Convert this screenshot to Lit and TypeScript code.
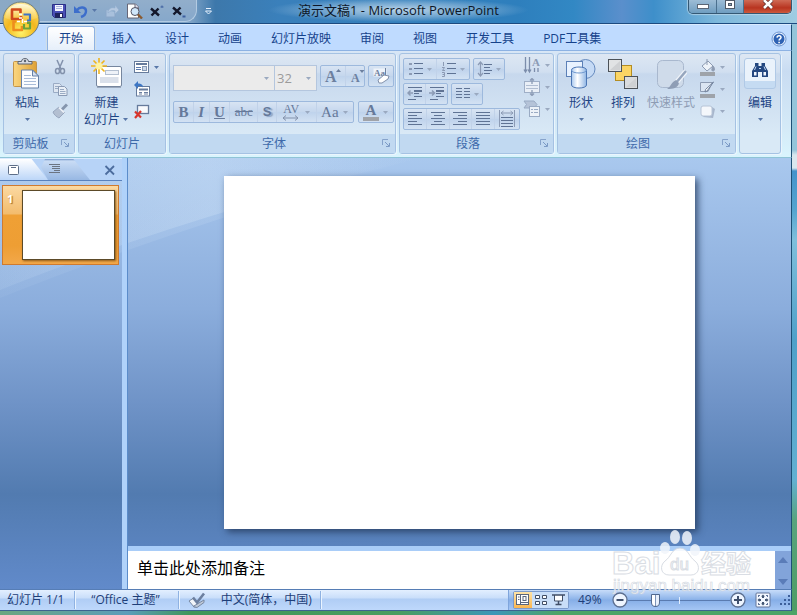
import { LitElement, html, css, svg, TemplateResult } from "lit";
import { customElement, property, state } from "lit/decorators.js";
import { classMap } from "lit/directives/class-map.js";

const grey = "#8291ab";
const dim = "#9aabc4";

const lines = (rows: [number, number, number][], color = "#5f7394") =>
  rows.map(([x1, x2, y]) => svg`<path d="M${x1} ${y}.5H${x2}" stroke=${color} fill="none"/>`);

const icons: Record<string, [number, number, unknown]> = {
  save: [16, 16, svg`<path d="M1.500 1.500h13v13h-11l-2-2z" fill="#4a4fb5" stroke="#2b2f88"/><path d="M4 2h8v6H4z" fill="#f4f6ff"/><path d="M5 3.500h6M5 5.500h6" stroke="#aab4dd"/><path d="M4 10h8v5H4z" fill="#20245e"/><path d="M9 11h2v3H9z" fill="#fff"/>`],
  undo: [16, 16, svg`<path d="M4 7c3-4 9-3 9 1 0 3-2 5-5 6" fill="none" stroke="#3d6ecb" stroke-width="2.400"/><path d="M1 3v7h7z" fill="#3d6ecb"/>`],
  redo: [16, 16, svg`<path d="M2 7v7h9V9" fill="#a8c0dc" stroke="#8aa6c8"/><path d="M4 10c0-5 4-6 7-5V2l4 5-4 4V8c-3-1-5 0-7 2z" fill="#b4c8e0" stroke="#8fabcd" stroke-width=".6"/>`],
  preview: [17, 16, svg`<path d="M1.500 1h8l3 3v11h-11z" fill="#fff" stroke="#667"/><path d="M9 1v4h4" fill="#dde" stroke="#667"/><circle cx="9" cy="8.500" r="4" fill="#cfe6fa" stroke="#556"/><path d="M12 11.500l4 4" stroke="#8a5a30" stroke-width="2.400"/>`],
  sup: [16, 16, svg`<path d="M2 5.500l8 7M9.500 5.500l-7 7" stroke="#14182c" stroke-width="2.400"/><path d="M11.500 4h3M13 2.500v2" stroke="#3c5f9e"/>`],
  sub: [16, 16, svg`<path d="M2 4.500l8 7M9.500 4.500l-7 7" stroke="#14182c" stroke-width="2.400"/><path d="M11.500 13.500h3" stroke="#3c5f9e" stroke-width="2"/>`],
  qat: [9, 9, svg`<path d="M2 1.500h5" stroke="#e8f2ff"/><path d="M1.500 4l3 3 3-3z" fill="none" stroke="#e8f2ff"/>`],
  down: [7, 5, svg`<path d="M1 1h5L3.500 4z" fill="#5877a8"/>`],
  downDim: [7, 5, svg`<path d="M1 1h5L3.500 4z" fill="#9aa9c0"/>`],
  help: [16, 16, svg`<circle cx="8" cy="8" r="7" fill="#e9f2ff" stroke="#6c93cf"/><circle cx="8" cy="8" r="5.500" fill="#2e62b4"/><path d="M6 6.600c.2-2.600 4.400-2.400 4 .1-.2 1.300-1.900 1.200-1.900 2.900" fill="none" stroke="#fff" stroke-width="1.500"/><path d="M7.300 10.700h1.600v1.500H7.300z" fill="#fff"/>`],
  paste: [32, 32, svg`<defs><linearGradient id="pb" x2="1"><stop stop-color="#fbd680"/><stop offset="1" stop-color="#dea136"/></linearGradient></defs><rect x="2.500" y="3.500" width="23" height="25" rx="1" fill="url(#pb)" stroke="#c4954a"/><path d="M7 6h14V3.500h-3.500C17 1 16 .6 14 .6s-3 .4-3.500 2.900H7z" fill="#d8dce3" stroke="#5b6370"/><circle cx="14" cy="3" r="1.200" fill="#5b6370"/><path d="M10.500 12.500h11l6 6v12h-17z" transform="translate(0 -.5)" fill="#fcfdff" stroke="#6681a8"/><path d="M21.500 12v6h6z" fill="#d5e0ef" stroke="#6681a8"/><path d="M13 17.500h7M13 20.500h12M13 23.500h12M13 26.500h12" stroke="#a9bcd8"/>`],
  cut: [16, 16, svg`<path d="M5 1l4 9M11 1L7 10" stroke=${grey} stroke-width="1.500" fill="none"/><ellipse cx="5.500" cy="12" rx="2" ry="2.600" fill="none" stroke=${grey} stroke-width="1.500"/><ellipse cx="10.500" cy="12" rx="2" ry="2.600" fill="none" stroke=${grey} stroke-width="1.500"/>`],
  copy: [16, 16, svg`<path d="M1.500 2.500h6l2 2v7h-8z" fill="#dfe7f2" stroke=${dim}/><path d="M3 5.500h4M3 7.500h4" stroke=${dim}/><path d="M6.500 5.500h6l2.500 2.500v6.500h-8.500z" fill="#e9eff7" stroke="#8a9ab4"/><path d="M8 8.500h4M8 10.500h5.500M8 12.500h5.500" stroke=${dim}/>`],
  brush: [16, 16, svg`<path d="M15 1.500l-5 5" stroke="#8595ad" stroke-width="3"/><path d="M7 4l5.500 5.500L7 15C5 14 2 12 1 9z" fill="#b3bfd1" stroke="#98a7bf"/><path d="M7 4.500l5 5" stroke="#f1f5fa" stroke-width="1.500"/>`],
  newSlide: [32, 32, svg`<rect x="5.500" y="8.500" width="25" height="20" rx="1.500" fill="#fff" stroke="#76869e"/><path d="M6 29.500h24" stroke="#9aa8bd"/><rect x="14.500" y="12.500" width="13" height="4" fill="#eef2f8" stroke="#b3bfd0"/><rect x="9" y="19" width="18.500" height="6" fill="#dae0ea"/><path d="M8 0v16M0 8h16M2.500 2.500l11 11M13.500 2.500l-11 11" stroke="#efb41c" stroke-width="1.600"/><circle cx="8" cy="8" r="3.600" fill="#fff3a0"/>`],
  layout: [16, 16, svg`<rect x=".5" y="2.500" width="14" height="11" fill="#fff" stroke="#667b9c"/><path d="M2 5h11" stroke="#667b9c" stroke-width="2"/><path d="M2 8.500h5M2 10.500h5" stroke="#5b7bb0"/><rect x="8.500" y="7.500" width="4" height="4" fill="#ccd8ea" stroke="#8598b4"/>`],
  reset: [16, 16, svg`<rect x="2.500" y="5.500" width="13" height="9.500" fill="#fff" stroke="#667b9c"/><path d="M5 8.500h9" stroke="#667b9c" stroke-width="2"/><path d="M5 11.500h3M5 13h3M10 11.500h4M10 13h4" stroke="#6a7ea0"/><path d="M0 4l4-4v2.500c3 0 5 1 5 4-1-1.500-2.500-1.800-5-1.500V8z" fill="#3d76c4"/>`],
  del: [16, 16, svg`<rect x="3.500" y="2.500" width="11" height="8" fill="#f8fafd" stroke="#667b9c" stroke-width="1.300"/><path d="M1 8.500l6 6M7 8l-6 7" stroke="#d8352c" stroke-width="2.200"/>`],
  launcher: [9, 9, svg`<path d="M.5 6V.5H6" fill="none" stroke="#86a3cb"/><path d="M3 3l4 4M7.500 4v3.500H4" fill="none" stroke="#7c9bc6"/>`],
  grow: [20, 18, svg`<text x="2" y="15" font-family="Liberation Serif" font-weight="bold" font-size="16" fill="#6d809f">A</text><path d="M13 5l2.500-3L18 5z" fill="#6d809f"/>`],
  shrink: [20, 18, svg`<text x="3" y="15" font-family="Liberation Serif" font-weight="bold" font-size="12" fill="#6d809f">A</text><path d="M11.500 3h5L14 6z" fill="#6d809f"/>`],
  clear: [20, 18, svg`<rect x="2.500" y="1.500" width="13" height="8" fill="#eef3fa"/><text x="3" y="9" font-family="Liberation Serif" font-weight="bold" font-size="9" fill="#6d809f">Aa</text><path d="M14.500 1v9" stroke="#6d809f"/><path d="M7 13l6-5 5 1-1 3-6 4H8z" fill="#fff" stroke="#8291ab"/>`],
  arrows2: [20, 6, svg`<path d="M2 3h15M5 .5L2 3l3 2.500M14 .5L17 3l-3 2.500" stroke=${grey} fill="none"/>`],
  bullets: [16, 16, svg`<path d="M1 3h3M1 8h3M1 13h3" stroke="#8c9bb5" stroke-width="1.800"/>${lines([[6, 15, 2], [6, 15, 7], [6, 15, 12]])}`],
  numbers: [16, 16, svg`<path d="M2.500 1v4M1 6.500h2.500l-2 3H4M1 11.500h2.500v4H1M1.500 13.500h2" fill="none" stroke="#8c9bb5"/>${lines([[6, 15, 2], [6, 15, 7], [6, 15, 12]])}`],
  spacing: [16, 16, svg`<path d="M3.500 1v14M1 4l2.500-3L6 4M1 12l2.500 3L6 12" fill="none" stroke="#8c9bb5" stroke-width="1.200"/>${lines([[7, 15, 3], [7, 13, 6], [7, 15, 9], [7, 13, 12]])}`],
  outdent: [16, 16, svg`${lines([[1, 15, 1], [7, 15, 4], [7, 15, 5], [7, 12, 7], [7, 15, 10], [1, 9, 13]])}<path d="M6 7H1M3.500 4.500L1 7l2.500 2.500" fill="none" stroke="#8c9bb5" stroke-width="1.500"/>`],
  indent: [16, 16, svg`${lines([[1, 15, 1], [7, 15, 4], [7, 15, 5], [7, 12, 7], [7, 15, 10], [1, 9, 13]])}<path d="M0 7h5M3 4.500L5.500 7 3 9.500" fill="none" stroke="#8c9bb5" stroke-width="1.500"/>`],
  columns: [16, 16, svg`${lines([[1, 7, 2], [9, 15, 2], [1, 7, 5], [9, 15, 5], [1, 7, 8], [9, 15, 8], [1, 7, 11], [9, 15, 11]])}`],
  left: [16, 16, svg`${lines([[1, 15, 1], [1, 10, 4], [1, 15, 7], [1, 10, 10], [1, 15, 13]])}`],
  center: [16, 16, svg`${lines([[1, 15, 1], [4, 12, 4], [1, 15, 7], [4, 12, 10], [1, 15, 13]])}`],
  right: [16, 16, svg`${lines([[1, 15, 1], [6, 15, 4], [1, 15, 7], [6, 15, 10], [1, 15, 13]])}`],
  justify: [16, 16, svg`${lines([[1, 15, 1], [1, 15, 4], [1, 15, 7], [1, 15, 10], [1, 15, 13]])}`],
  distribute: [18, 18, svg`<path d="M1.500 0v17M16.500 0v17M3 3h12M5.500 1L3 3l2.500 2M12.500 1L15 3l-2.500 2" fill="none" stroke="#8c9bb5"/>${lines([[3, 15, 7], [3, 15, 10], [3, 15, 13], [3, 15, 16]])}`],
  direction: [18, 18, svg`<path d="M2.500 1v15M6.500 1v15M1 13.500L2.500 16 4 13.500M5 13.500L6.500 16 8 13.500M11.500 12v4M15 12v4" fill="none" stroke="#7c8dab" stroke-width="1.300"/><text x="9" y="10" font-family="Liberation Serif" font-weight="bold" font-size="11" fill="#8c9bb5">A</text>`],
  alignText: [18, 18, svg`<rect x="1.500" y="3.500" width="15" height="11" fill="#e9eff7" stroke="#9fafc7"/><path d="M3 7.500h12M3 10.500h12" stroke="#b1bed2"/><path d="M9 0v6M9 12v5M7 2.500L9 .5l2 2M7 15.500l2 2 2-2" fill="none" stroke="#8c9bb5" stroke-width="1.300"/>`],
  smartArt: [18, 18, svg`<path d="M1 1h10l3 3.500L11 8H1l2.500-3.500z" fill="#b5c3d8" stroke="#9aabc4"/><rect x="6.500" y="6.500" width="10" height="10" fill="#edf2f8" stroke="#9aabc4"/><path d="M8 9.500h2M11 9.500h4M8 12.500h2M11 12.500h4" stroke="#9aabc4"/>`],
  shapes: [32, 32, svg`<defs><linearGradient id="cy" x2="1"><stop stop-color="#a9c8ee"/><stop offset=".4" stop-color="#fff"/><stop offset="1" stop-color="#8fb5e4"/></linearGradient></defs><circle cx="20.500" cy="11" r="9.500" fill="#c5daf5" stroke="#6489be"/><rect x="1.500" y="3.500" width="16" height="15" fill="#e8f2ff" stroke="#5c80b7"/><path d="M6.500 12c0-4 15-4 15 0v15c0 4-15 4-15 0z" fill="url(#cy)" stroke="#4c76b4"/><path d="M6.500 12c0 4 15 4 15 0" fill="none" stroke="#6f98cf"/>`],
  arrange: [32, 32, svg`<rect x="8.500" y="7.500" width="16" height="15" fill="#fbd564" stroke="#b48d22"/><rect x="1.500" y="1.500" width="13" height="12" fill="#e1e3e4" stroke="#4c5258"/><rect x="17.500" y="18.500" width="13" height="12" fill="#dadcde" stroke="#4c5258"/><path d="M3 12L13 3v9zM19 29l10-9v9z" fill="#cfd1d3"/>`],
  styles: [32, 32, svg`<rect x="2.500" y="2.500" width="26" height="27" rx="5" fill="#cfdbea" stroke="#a9b8ce"/><path d="M31 13L20 26" stroke="#f0f4fa" stroke-width="5"/><path d="M31 13L20 26" stroke="#96a6be" stroke-width="2.500"/><path d="M21 22l3 3c-1 5-6 6-12 6 4-2 4-7 9-9z" fill="#8e9db5"/>`],
  fill: [17, 17, svg`<path d="M3 7l6-5 5 5-6 5z" fill="#eef3f9" stroke="#8d9bb2"/><path d="M8 0v6M14 7c2 2 2 5 0 5s-1-3 0-5z" stroke="#8d9bb2" fill="#8d9bb2"/><path d="M1 13h15v4H1z" fill="#9ea3aa"/>`],
  outline: [17, 17, svg`<path d="M1.500 1.500h12L9 10.500H1.500z" fill="#dbe5f2" stroke="#8d9bb2"/><path d="M14.500 1L8 10l-2 1 .5-2.500z" fill="#fff" stroke="#6f809b"/><path d="M1 13h15v4H1z" fill="#9ea3aa"/>`],
  effects: [17, 17, svg`<path d="M4 14l10 1 2-9-3-2z" fill="#a7b6cc"/><rect x="2" y="3" width="11" height="10" rx="2" fill="#f4f7fb" stroke="#b6c4d7"/>`],
  find: [18, 18, svg`<path d="M4 2h3.500v3h3V2H14v3l3 5v6h-6v-5H7v5H1v-6l3-5z" fill="#24477f"/><path d="M3 11h2.500v3.500H3zM12.500 11H15v3.500h-2.500z" fill="#f1f6fd"/><path d="M5 5.500L3.500 9M13 5.500L14.500 9M8 7.500h2" stroke="#c4d7f2"/>`],
  slideTab: [12, 10, svg`<rect x=".5" y=".5" width="10" height="9" rx="1" fill="#fff" stroke="#5d6e88"/><path d="M3 2.500h5" stroke="#5d6e88"/>`],
  outlineTab: [12, 11, svg`${lines([[0, 11, 0], [3, 11, 2], [3, 11, 4], [5, 11, 6], [0, 11, 8]], "#6b7482")}`],
  close: [12, 12, svg`<path d="M1.500 2l8.500 8.500M10 2l-8.500 8.500" stroke="#4d6d9e" stroke-width="1.800"/>`],
  spell: [18, 16, svg`<path d="M1 9l4-2.500 5 4-2 4.500-2 0z" fill="#f2f5f9" stroke="#7888a2"/><path d="M5 14.500L16 8v2.500L9 15.500z" fill="#bfc9d8" stroke="#7888a2"/><path d="M5 5.500l4 5 7-9" fill="none" stroke="#6c7f9f" stroke-width="2.600"/>`],
  normalView: [16, 14, svg`<rect x="1.500" y="1.500" width="12" height="10" fill="#fff" stroke="#5a667c"/><path d="M5.500 2v9.500M6 9.500h8M3 4h1.500M3 6.500h1.500" stroke="#5a667c"/><rect x="8" y="3.500" width="3" height="4" fill="none" stroke="#5a667c"/>`],
  sorter: [16, 14, svg`<path d="M2.500 2.500h4v3h-4zM9.500 2.500h4v3h-4zM2.500 8.500h4v3h-4zM9.500 8.500h4v3h-4z" fill="#fff" stroke="#404e66"/>`],
  show: [16, 14, svg`<path d="M3.500 2v6h8V2" fill="#fff" stroke="#404e66"/><path d="M1 2h13M7.500 8v3M4.500 11.500h6" fill="none" stroke="#404e66" stroke-width="1.500"/>`],
  minus: [16, 16, svg`<circle cx="8" cy="8" r="7" fill="#eef5ff" stroke="#5c6f90" stroke-width="1.300"/><path d="M4.500 8h7" stroke="#3f4f6c" stroke-width="2"/>`],
  plus: [16, 16, svg`<circle cx="8" cy="8" r="7" fill="#eef5ff" stroke="#5c6f90" stroke-width="1.300"/><path d="M4 8h8M8 4v8" stroke="#3f4f6c" stroke-width="2"/>`],
  fit: [16, 16, svg`<rect x="1" y="1" width="14" height="14" rx="1" fill="#f4f8ff" stroke="#63759a"/><path d="M8 2.500l2 2H9V6H7V4.500H6zM8 13.500l2-2H9V10H7v1.500H6zM2.500 8l2-2v1H6v2H4.500v1zM13.500 8l-2-2v1H10v2h1.500v1z" fill="#445673"/><path d="M3 3h2v1H4v1H3zM13 3h-2v1h1v1h1zM3 13h2v-1H4v-1H3zM13 13h-2v-1h1v-1h1z" fill="#63759a"/>`],
  grip: [12, 12, svg`<path d="M9 1h2v2H9zM9 5h2v2H9zM9 9h2v2H9zM5 5h2v2H5zM5 9h2v2H5zM1 9h2v2H1z" fill="#3c5f9a"/>`],
  winMin: [14, 10, svg`<rect x="1.500" y="4.500" width="11" height="4" fill="#fff" stroke="#5b6675"/>`],
  winMax: [12, 10, svg`<rect x="1.500" y=".5" width="9" height="8" fill="#fff" stroke="#4f5966"/><rect x="4.500" y="3.500" width="3" height="2" fill="#8fa5bb" stroke="#4f5966"/>`],
  winClose: [14, 10, svg`<path d="M3 0l8 8M11 0L3 8" stroke="#5a2c2c" stroke-width="4"/><path d="M3 0l8 8M11 0L3 8" stroke="#fff" stroke-width="2.600"/>`],
  up: [12, 8, svg`<path d="M1 7h10L6 1z" fill="#5a7cb8"/>`],
  dn: [12, 8, svg`<path d="M1 1h10L6 7z" fill="#5a7cb8"/>`],
  orb: [38, 38, svg`<defs><radialGradient id="ob" cx=".5" cy=".85" r=".9"><stop stop-color="#fff36a"/><stop offset=".45" stop-color="#f3b71d"/><stop offset=".75" stop-color="#f8d257"/><stop offset="1" stop-color="#fdf0b8"/></radialGradient><linearGradient id="ow" y2="1" x2="0"><stop stop-color="#fffbe6" stop-opacity=".95"/><stop offset="1" stop-color="#fde27a" stop-opacity=".25"/></linearGradient></defs><circle cx="19" cy="19" r="18" fill="url(#ob)" stroke="#6e7d80"/><path d="M3 17C4 7 11 3 19 3s15 4 16 14c-9 4-23 4-32 0z" fill="url(#ow)"/><g fill="none" stroke-linejoin="round"><path d="M18.500 12V8.500h-8.500V18h9v-3" stroke="#cf4a1c" stroke-width="2.600"/><path d="M21.500 13.500h6.500v6h-3" stroke="#3f74c4" stroke-width="2.200"/><path d="M14 20.500h-2.500V29h8.500v-4" stroke="#ee8d1d" stroke-width="2.600"/><path d="M22 23v4.500h6v-5.500h-3" stroke="#6aa23a" stroke-width="2.200"/></g><path d="M17 13.500h3M17 17h3M20.500 18v4M15 20.500h3M22 20.500h3" stroke="#fff" stroke-width="1.500"/>`],
};

const icon = (name: string): TemplateResult => {
  const [w, h, body] = icons[name];
  return html`<svg width=${w} height=${h} viewBox="0 0 ${w} ${h}" aria-hidden="true">${body}</svg>`;
};

const base = css`
  * { box-sizing: border-box; }
  button, select, input, textarea {
    font: inherit; color: inherit; margin: 0; padding: 0; border: 0;
    background: none; outline: none; border-radius: 0;
  }
  svg { display: block; flex: none; }
`;

@customElement("ribbon-group")
class RibbonGroup extends LitElement {
  @property() label = "";
  @property({ type: Boolean }) launcher = false;
  static styles = [base, css`
    :host {
      display: flex; flex-direction: column; flex: none; border: 1px solid #a5c2e3; border-radius: 3px;
      background: linear-gradient(#dde7f3, #d1dff0 18px, #c7d8ed 20px, #d9e9f6 80px);
      box-shadow: 1px 1px 0 #eaf5fd;
    }
    .body { flex: 1; display: flex; }
    .foot { height: 19px; display: flex; align-items: center; background: #c1d9f1; color: #3e6aaa; padding: 0 4px; }
    .foot span { flex: 1; text-align: center; }
    .foot span:not(:last-child) { padding-right: 8px; }
    button { height: 13px; }
  `];
  render() {
    return html`<div class="body"><slot></slot></div>
      ${this.label ? html`<div class="foot"><span>${this.label}</span>
        ${this.launcher ? html`<button aria-label="${this.label}选项">${icon("launcher")}</button>` : ""}</div>` : ""}`;
  }
}

@customElement("app-root")
class AppRoot extends LitElement {
  @state() private tab = "开始";
  @state() private zoom = 25;

  static styles = [base, css`
    :host {
      box-sizing: border-box; display: flex; flex-direction: column; min-height: 100vh; overflow: hidden; position: relative;
      font: 12px/16px "Open Sans", "Noto Sans CJK SC", sans-serif; color: #1e3e78;
      background: linear-gradient(#94c5da 0 150px, #d9e7ee 155px 168px, #4593cb 171px, #55a4cf 210px, #7fbfdc 240px, #4fa0c9 340px, #62b0d2 480px, #58a47e 520px, #4d9d63);
      padding: 0 5px 4px 0;
    }
    .title {
      height: 24px; margin-right: -5px; display: grid; grid-template-columns: 1fr auto 1fr; align-items: start;
      background:
        radial-gradient(ellipse 130px 12px at 50% 10px, #b9d3e8 0, #8db7d9aa 60%, transparent),
        linear-gradient(90deg, #8ba9c5, #7ca1c5 24%, #3d78ab 27%, #3a80bb 35%, #2e7fbd 65%, #3288c4 72%, #5a8fcc 78%, #3e8fca 82%, #7db8dc 90%, #9fcce2);
      border-bottom: 1px solid #1c4a80;
    }
    .qat {
      justify-self: start; margin-left: 40px; height: 22px; width: 157px; padding: 0 8px 0 11px; display: flex; align-items: center; gap: 6px;
      border-radius: 0 0 12px 0; background: linear-gradient(#92aecb, #86a8cb); border: 1px solid #b3cbe2; border-width: 0 1px 1px 0;
    }
    .qatwrap { display: flex; align-items: center; gap: 7px; }
    .heading { margin: 0; font-size: 13px; font-weight: 400; line-height: 20px; color: #0c1626; white-space: nowrap; }
    .win { justify-self: end; display: flex; margin-right: 5px; height: 14px; border: 1px solid #345874; border-top: 0; border-radius: 0 0 5px 5px; overflow: hidden; box-shadow: 0 0 1px 1px #c5dcecaa; }
    .win button { width: 28px; display: flex; justify-content: center; background: linear-gradient(#9dbdd6, #6f9dc0); border-right: 1px solid #4b708e; }
    .win .max { width: 27px; }
    .win .x { width: 47px; border: 0; background: linear-gradient(#cf6a55, #b83420 60%, #cd5a3d); }
    .orb { position: absolute; left: 2px; top: 1px; }

    .tabs { height: 26px; display: flex; gap: 5px; padding: 1px 3px 0 47px; background: #bfdbff; border-top: 1px solid #d9ebff; border-right: 1px solid #1e5076; }
    .tabs button { padding: 0 11px; border: 1px solid transparent; border-bottom: 0; border-radius: 3px 3px 0 0; color: #15428b; white-space: nowrap; }
    .tabs .on { background: linear-gradient(#fff, #e6effa); border-color: #8db2e3; box-shadow: 0 0 2px #ffe9a8; }
    .tabs .help { margin-left: auto; padding: 0; }

    .ribbon {
      height: 108px; display: flex; gap: 3px; padding: 2px 3px 3px; border: 1px solid #8db2e3; border-left: 0; border-right-color: #1e5076;
      border-bottom-color: #8fc4d6; background: linear-gradient(#d8e6f6, #c9dcf2 20px, #d5ebf8 80px, #d9f4fd); white-space: nowrap;
    }
    .clip { width: 72px; } .slides { width: 88px; } .font { width: 227px; }
    .para { width: 155px; } .draw { width: 179px; } .edit { width: 42px; }
    .big { display: flex; flex-direction: column; align-items: center; line-height: 17px; color: #1e4484; }
    .big svg { margin-bottom: 4px; }
    .big svg:last-child { margin: 0; }
    .inline { display: flex; align-items: center; gap: 2px; }
    .big .inline svg { margin: 0; }
    .big .cap { margin-bottom: 6px; }
    .off { color: #8e9cb4; }
    .clip .big { padding: 4px 0 0 6px; width: 40px; }
    .col { display: flex; flex-direction: column; gap: 6px; padding-top: 5px; }
    .col button { display: flex; align-items: center; gap: 3px; height: 16px; }
    .clip .col { margin-left: 8px; }
    .slides .big { padding: 4px 0 0 5px; }
    .slides .col { margin-left: 5px; }
    .stack { display: flex; flex-direction: column; }
    .row { display: flex; gap: 3px; }
    .font .stack { padding: 11px 3px 0; gap: 10px; flex: 1; }
    .para .stack { padding: 4px 3px 0; gap: 3px; }
    .set { display: flex; border: 1px solid #9db9dd; border-radius: 2px; height: 22px; background: linear-gradient(#d8e4f3, #c4d6ed 50%, #bfd3ec 52%, #d3e2f3); color: #66799a; }
    .set button { display: flex; align-items: center; justify-content: center; gap: 3px; flex: 1 1 auto; padding: 0 2px; border-right: 1px solid #c1d2e9; }
    .set button:last-child { border-right: 0; }
    .font .row { justify-content: space-between; }
    .combos { display: flex; }
    .combo { display: flex; align-items: center; height: 26px; background: #ebebeb; border: 1px solid #b4c6de; color: #9b9b9b; padding-right: 4px; }
    .combo select { appearance: none; flex: 1; min-width: 0; height: 100%; padding: 0 2px; opacity: 1; font-size: 13px; }
    .combo.face { width: 102px; } .combo.size { width: 43px; margin-left: -1px; }
    .serif { font-family: "Liberation Serif", serif; font-size: 15px; line-height: 18px; }
    .b { font-weight: 700; } .i { font-style: italic; font-weight: 700; } .u { text-decoration: underline; font-weight: 700; }
    .s { text-decoration: line-through; } .small { font-size: 13px; }
    .sh { font-family: "Liberation Sans", sans-serif; font-weight: 700; font-size: 13px; text-shadow: 2px 1px 1px #8fa4c4; }
    .av { display: flex; flex-direction: column; line-height: 11px; align-items: center; font-size: 12px; }
    .colour { border-bottom: 4px solid #a0a3a8; line-height: 14px; padding: 0 3px; }
    .para .col { padding-top: 3px; }
    .w67 { width: 67px; } .w32 { width: 32px; } .w45 { width: 45px; } .w117 { width: 117px; } .w180 { width: 181px; } .w36 { width: 36px; }
    .para .set button { gap: 2px; padding: 0; }
    .draw .big { padding-top: 4px; }
    .draw .b1 { margin-left: 6px; width: 34px; } .draw .b2 { margin-left: 8px; width: 34px; } .draw .b3 { margin-left: 6px; width: 50px; }
    .draw .col { margin-left: 3px; padding-top: 5px; }
    .edit .big { width: 40px; padding-top: 4px; }
    .frame { width: 32px; height: 31px; margin-bottom: 5px; padding-top: 2px; display: grid; place-items: start center; border: 1px solid #b0c9e6; border-radius: 3px; background: linear-gradient(#eaf2fb 22px, #c5dbf2 22px); }

    .work { flex: 1; display: flex; position: relative; border-right: 1px solid #1e5076; background: linear-gradient(#a9c8ee, #8baddc 35%, #6f93c7 57%, #527bb0 78%, #618aca); }
    .wave { position: absolute; inset: 0 auto auto 0; width: 420px; height: 140px; }
    .pane { position: relative; width: 122px; display: flex; flex-direction: column; }
    .ptabs { display: flex; height: 23px; background: #b7d3f7; border-bottom: 1px solid #5a82bd; border-top: 1px solid #dbeaff; }
    .ptabs button { width: 48px; padding-left: 8px; clip-path: polygon(0 0, 66% 0, 100% 100%, 0 100%); background: linear-gradient(#fff, #bcd6f8); }
    .ptabs .two { margin-left: -7px; width: 49px; padding-left: 8px; clip-path: polygon(4px 0, 66% 0, 100% 100%, 7px 100%, 0 40%); background: linear-gradient(#7597c8, #c9dcf5 2px, #98b8e3); }
    .ptabs .cl { clip-path: none; background: none; width: 12px; padding: 0; margin-left: auto; margin-right: 6px; }
    .thumb { display: flex; margin: 4px 3px 0 2px; height: 80px; padding: 4px 3px 4px 4px; border: 1px solid #cf7a2f; background: linear-gradient(#fbd9a2, #f3bc6d 28px, #efa035 29px, #ee9e34 60px, #f2a84a); color: #fff; font-weight: 700; font-size: 11px; }
    .thumb span { width: 15px; text-align: left; text-shadow: 1px 1px 1px #a46a20; padding-top: 1px; }
    .thumb i { flex: 1; align-self: stretch; background: #fff; border: 1px solid #5c4a28; box-shadow: 1px 1px 2px #8d5a1a; }
    .split { width: 6px; background: #b0d2fa; border-right: 1px solid #5b8cca; position: relative; }
    .main { flex: 1; display: flex; flex-direction: column; min-width: 0; position: relative; }
    .canvas { flex: 1; display: grid; place-items: center; padding: 18px 0 17px; grid-template-rows: minmax(0, 1fr); min-height: 0; }
    .slide { height: 100%; aspect-ratio: 4 / 3; background: #fff; box-shadow: 3px 3px 7px #22375acc; }
    .notes { height: 43px; display: flex; border-top: 5px solid #a9cdf8; }
    .notes textarea { flex: 1; min-width: 0; resize: none; background: #fff; color: #000; font-size: 16px; line-height: 20px; padding: 7px 9px; overflow: hidden; display: block; }
    .notes textarea::placeholder { color: #000; opacity: 1; }
    .bar { width: 16px; display: flex; flex-direction: column; justify-content: space-between; align-items: center; padding: 5px 0 3px; background: #82a4da; }

    .status { height: 22px; display: flex; align-items: center; border-right: 1px solid #1e5076; border-top: 1px solid #567db5; border-bottom: 1px solid #3c6390; background: linear-gradient(#e3efff, #c9defa 8px, #b0cdf5 9px, #bed8fb); white-space: nowrap; }
    .cell { height: 18px; display: flex; align-items: center; border-right: 1px solid #8fb2e2; box-shadow: 1px 0 0 #eaf4ff; padding: 0 10px 0 7px; }
    .c2 { padding: 0 18px 0 16px; } .c3 { gap: 15px; padding: 0 8px 0 9px; }
    .rest { flex: 1; align-self: stretch; display: flex; align-items: center; justify-content: flex-end; }
    .tools { height: 20px; display: flex; align-items: center; padding: 0 0 0 4px; border-left: 1px solid #7fa5dc; background: linear-gradient(#c7dcf9, #8fb5ea 9px, #86aee7 10px, #a5c6f4); }
    .views { display: flex; height: 18px; border: 1px solid #7c9bcb; border-radius: 2px; margin-right: 9px; }
    .views button { width: 18px; display: grid; place-items: center; background: #c9def8; }
    .views .on { background: linear-gradient(#fde3a8, #fbb650); }
    .pct { width: 34px; }
    .slider { position: relative; display: flex; align-items: center; }
    .slider::after { content: ""; position: absolute; left: 50%; top: 5px; width: 1px; height: 7px; background: #e2eefe; }
    input[type="range"] { appearance: none; width: 102px; height: 16px; background: linear-gradient(#5a7bb0, #5a7bb0) center / 100% 1px no-repeat; }
    input[type="range"]::-webkit-slider-thumb { appearance: none; width: 9px; height: 13px; border: 1px solid #52698e; border-radius: 1px 1px 5px 5px; background: linear-gradient(90deg, #fff 3px, #7d94b8 3px 4px, #e8f0fc 4px); }
    .fit { margin: 0 8px 0 9px; }
    .foot { position: absolute; left: 0; right: 0; bottom: 0; height: 4px; background: linear-gradient(90deg, #6aa680, #5b9dba 16%, #3f9659 24%, #4a9d60 50%, #3d96b8 62%, #4da467 70%, #4da467); }

    .mark { position: absolute; right: 35px; bottom: 15px; width: 150px; height: 70px; pointer-events: none; opacity: .85; }
  `];

  private set(name: string, arrow = false) {
    return html`<button disabled aria-label=${name}>${icon(name)}${arrow ? icon("downDim") : ""}</button>`;
  }

  render() {
    const tabs = ["开始", "插入", "设计", "动画", "幻灯片放映", "审阅", "视图", "开发工具", "PDF工具集"];
    return html`
      <header class="title">
        <div class="qatwrap">
          <div class="qat">
            <button aria-label="保存">${icon("save")}</button>
            <button class="inline" aria-label="撤消">${icon("undo")}${icon("down")}</button>
            <button aria-label="重复">${icon("redo")}</button>
            <button aria-label="打印预览">${icon("preview")}</button>
            <button aria-label="上标">${icon("sup")}</button>
            <button aria-label="下标">${icon("sub")}</button>
          </div>
          <button aria-label="自定义">${icon("qat")}</button>
        </div>
        <h1 class="heading">演示文稿1 - Microsoft PowerPoint</h1>
        <div class="win">
          <button aria-label="最小化">${icon("winMin")}</button>
          <button class="max" aria-label="最大化">${icon("winMax")}</button>
          <button class="x" aria-label="关闭">${icon("winClose")}</button>
        </div>
      </header>
      <nav class="tabs">
        ${tabs.map((t) => html`<button class=${classMap({ on: t === this.tab })} @click=${() => (this.tab = t)}>${t}</button>`)}
        <button class="help" aria-label="帮助">${icon("help")}</button>
      </nav>
      <button class="orb" aria-label="Office">${icon("orb")}</button>

      <section class="ribbon">
        <ribbon-group class="clip" label="剪贴板" launcher>
          <button class="big">${icon("paste")}<span class="cap">粘贴</span>${icon("down")}</button>
          <div class="col">
            <button aria-label="剪切">${icon("cut")}</button>
            <button aria-label="复制">${icon("copy")}</button>
            <button aria-label="格式刷">${icon("brush")}</button>
          </div>
        </ribbon-group>
        <ribbon-group class="slides" label="幻灯片">
          <button class="big">${icon("newSlide")}<span>新建</span><span class="inline">幻灯片 ${icon("down")}</span></button>
          <div class="col">
            <button aria-label="版式">${icon("layout")}${icon("down")}</button>
            <button aria-label="重设">${icon("reset")}</button>
            <button aria-label="删除">${icon("del")}</button>
          </div>
        </ribbon-group>
        <ribbon-group class="font" label="字体" launcher>
          <div class="stack">
            <div class="row">
              <div class="combos">
                <label class="combo face"><select disabled aria-label="字体"><option></option></select>${icon("downDim")}</label>
                <label class="combo size"><select disabled aria-label="字号"><option>32</option></select>${icon("downDim")}</label>
              </div>
              <div class="set w45">${this.set("grow")}${this.set("shrink")}</div>
              <div class="set">${this.set("clear")}</div>
            </div>
            <div class="row">
              <div class="set w180">
                <button disabled class="serif b">B</button>
                <button disabled class="serif i">I</button>
                <button disabled class="serif u">U</button>
                <button disabled class="serif s small">abc</button>
                <button disabled class="sh">S</button>
                <button disabled class="serif"><span class="av">AV${icon("arrows2")}</span>${icon("downDim")}</button>
                <button disabled class="serif">Aa${icon("downDim")}</button>
              </div>
              <div class="set w36"><button disabled class="serif b"><span class="colour">A</span>${icon("downDim")}</button></div>
            </div>
          </div>
        </ribbon-group>
        <ribbon-group class="para" label="段落" launcher>
          <div class="stack">
            <div class="row">
              <div class="set w67">${this.set("bullets", true)}${this.set("numbers", true)}</div>
              <div class="set w32">${this.set("spacing", true)}</div>
            </div>
            <div class="row">
              <div class="set w45">${this.set("outdent")}${this.set("indent")}</div>
              <div class="set w32">${this.set("columns", true)}</div>
            </div>
            <div class="set w117">${["left", "center", "right", "justify", "distribute"].map((n) => this.set(n))}</div>
          </div>
          <div class="col">${["direction", "alignText", "smartArt"].map((n) => this.set(n, true))}</div>
        </ribbon-group>
        <ribbon-group class="draw" label="绘图" launcher>
          <button class="big b1">${icon("shapes")}<span class="cap">形状</span>${icon("down")}</button>
          <button class="big b2">${icon("arrange")}<span class="cap">排列</span>${icon("down")}</button>
          <button class="big b3 off" disabled>${icon("styles")}<span class="cap">快速样式</span>${icon("downDim")}</button>
          <div class="col">${["fill", "outline", "effects"].map((n) => this.set(n, true))}</div>
        </ribbon-group>
        <ribbon-group class="edit">
          <button class="big"><span class="frame">${icon("find")}</span><span class="cap">编辑</span>${icon("down")}</button>
        </ribbon-group>
      </section>

      <section class="work">
        <svg class="wave" viewBox="0 0 420 140" preserveAspectRatio="none" aria-hidden="true">
          <defs><linearGradient id="wv" x2="1"><stop stop-color="#c4daf3" stop-opacity=".15"/><stop offset=".5" stop-color="#c4daf3" stop-opacity=".45"/><stop offset="1" stop-color="#c4daf3" stop-opacity="0"/></linearGradient></defs>
          <path d="M0 132Q180 60 420 0H0z" fill="url(#wv)"/><path d="M0 140Q180 68 420 0H0z" fill="url(#wv)" opacity=".5"/>
        </svg>
        <aside class="pane">
          <div class="ptabs">
            <button aria-label="幻灯片">${icon("slideTab")}</button>
            <button class="two" aria-label="大纲">${icon("outlineTab")}</button>
            <button class="cl" aria-label="关闭窗格">${icon("close")}</button>
          </div>
          <button class="thumb" aria-label="第一张"><span>1</span><i></i></button>
        </aside>
        <div class="split"></div>
        <div class="main">
          <div class="canvas"><div class="slide"></div></div>
          <div class="notes">
            <textarea aria-label="备注" placeholder="单击此处添加备注"></textarea>
            <div class="bar">${icon("up")}${icon("dn")}</div>
          </div>
        </div>
      </section>

      <footer class="status">
        <div class="cell">幻灯片 1/1</div>
        <div class="cell c2">“Office 主题”</div>
        <div class="cell c3">${icon("spell")}<span>中文(简体，中国)</span></div>
        <div class="rest"><div class="tools">
          <div class="views">
            <button class="on" aria-label="普通视图">${icon("normalView")}</button>
            <button aria-label="浏览视图">${icon("sorter")}</button>
            <button aria-label="放映">${icon("show")}</button>
          </div>
          <span class="pct">49%</span>
          <button aria-label="缩小">${icon("minus")}</button>
          <label class="slider"><input type="range" aria-label="显示比例" min="0" max="100" .value=${String(this.zoom)}
            @input=${(e: Event) => (this.zoom = Number((e.target as HTMLInputElement).value))}></label>
          <button aria-label="放大">${icon("plus")}</button>
          <button class="fit" aria-label="适应窗口">${icon("fit")}</button>
          ${icon("grip")}
        </div></div>
      </footer>
      <div class="foot"></div>
      <svg class="mark" viewBox="0 0 150 70" aria-hidden="true">
        <g fill="#fff" stroke="#d3d8e0" stroke-width="1">
          <g font-family="Liberation Sans" font-weight="bold">
            <text x="0" y="44" font-size="31">Bai</text>
            <text x="89" y="43" font-size="25" font-family="Noto Sans CJK SC">经验</text>
          </g>
          <path d="M68 18c8 0 9 9 15 13 6 5 4 14-4 14H57c-8 0-10-9-4-14 6-4 7-13 15-13z"/>
          <text x="58" y="40" font-size="17" font-family="Liberation Sans">du</text>
        </g>
        <g fill="#f1f5fb"><ellipse cx="53" cy="18" rx="5" ry="6"/><ellipse cx="63" cy="7" rx="5" ry="7"/><ellipse cx="75" cy="8" rx="5" ry="7"/><ellipse cx="83" cy="20" rx="5" ry="6"/></g>
        <text x="1" y="61" font-size="17" font-family="Liberation Sans" fill="#fff" stroke="#c9d0da" stroke-width=".6">jingyan.baidu.com</text>
      </svg>
    `;
  }
}
